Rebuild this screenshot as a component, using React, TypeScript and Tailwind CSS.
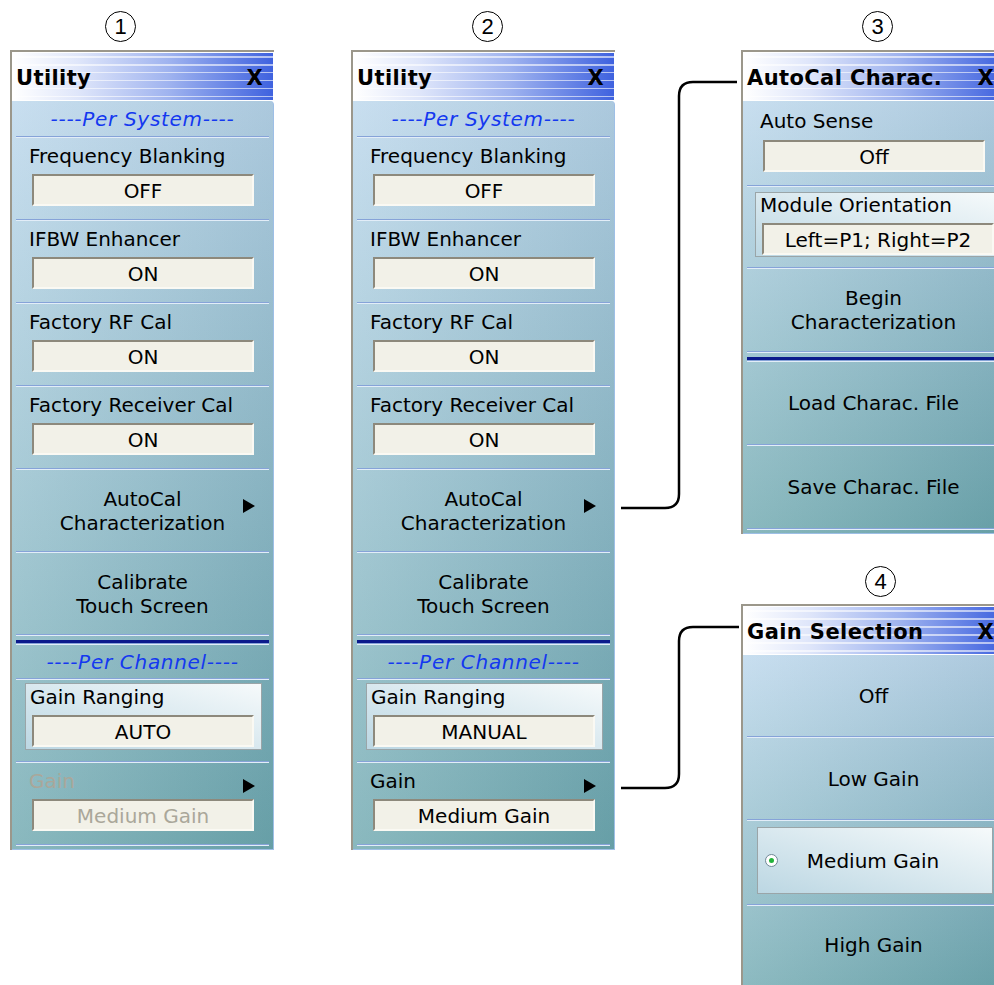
import React from "react";

const UI = "font-['DejaVu_Sans',sans-serif]";

const Num = ({ n }: { n: string }) => (
  <div className="flex h-[31px] w-[31px] items-center justify-center rounded-full border-[1.5px] border-black font-['Liberation_Sans',sans-serif] text-[22px] leading-none text-black">
    {n}
  </div>
);

const Arrow = ({ className }: { className: string }) => (
  <svg width="12" height="14" viewBox="0 0 12 14" className={className}>
    <polygon points="0,0 12,7 0,14" fill="#000" />
  </svg>
);

const Sep = () => (
  <div className="mx-[4px]">
    <div className="h-px bg-[#86a3d8]" />
    <div className="h-px bg-[#e2edf8]" />
  </div>
);

const Divider = () => (
  <div className="mx-[4px]">
    <div className="h-px bg-[#86a3d8]" />
    <div className="h-px bg-[#e2edf8]" />
    <div className="h-[4px]" />
    <div className="h-[3px] bg-[#0b1a8c]" />
    <div className="h-px bg-[#86a3d8]" />
    <div className="h-px bg-[#e2edf8]" />
  </div>
);

const Heading = ({ text, className }: { text: string; className: string }) => (
  <div
    className={`flex items-center justify-center text-[20px] italic tracking-[0.7px] text-[#1438f0] ${className}`}
  >
    {text}
  </div>
);

const ValueBox = ({ value, disabled }: { value: string; disabled?: boolean }) => (
  <div
    className={`flex h-[32px] items-center justify-center border-2 border-t-[#8d897c] border-l-[#8d897c] border-r-[#faf9f3] border-b-[#faf9f3] bg-[#f2f1e8] pt-[2px] text-[20px] leading-none ${
      disabled ? "text-[#aaa79a]" : "text-black"
    }`}
  >
    {value}
  </div>
);

const Field = ({
  label,
  value,
  disabled,
  arrow,
  className = "h-[81px] pt-[6px]",
  gap = "mt-[6px]",
}: {
  label: string;
  value: string;
  disabled?: boolean;
  arrow?: boolean;
  className?: string;
  gap?: string;
}) => (
  <div className={`relative ${className}`}>
    <div
      className={`pl-[17px] text-[20px] leading-[24px] ${
        disabled ? "text-[#aaa79a]" : "text-black"
      }`}
    >
      {label}
    </div>
    {arrow && <Arrow className="absolute right-[18px] top-[16px]" />}
    <div className={`ml-[20px] mr-[19px] ${gap}`}>
      <ValueBox value={value} disabled={disabled} />
    </div>
  </div>
);

const Highlight = ({
  label,
  value,
  className = "h-[81px] pt-[3px]",
}: {
  label: string;
  value: string;
  className?: string;
}) => (
  <div className={className}>
    <div className="ml-[13px] mr-[11px] h-[67px] border border-[#9aa5a8] bg-[linear-gradient(to_bottom_left,#f6fafb,#bcd7e3)] pt-[1px]">
      <div className="pl-[4px] text-[20px] leading-[24px] text-black">{label}</div>
      <div className="ml-[6px] mr-[7px] mt-[6px]">
        <ValueBox value={value} />
      </div>
    </div>
  </div>
);

const Action = ({
  lines,
  arrow,
  className = "h-[81px]",
}: {
  lines: string[];
  arrow?: boolean;
  className?: string;
}) => (
  <div
    className={`relative flex flex-col items-center justify-center text-[20px] leading-[24px] text-black ${className}`}
  >
    {lines.map((l) => (
      <div key={l}>{l}</div>
    ))}
    {arrow && <Arrow className="absolute right-[18px] top-[29px]" />}
  </div>
);

const Panel = ({ title, children }: { title: string; children: React.ReactNode }) => (
  <div className={`w-[264px] border-l-2 border-t-2 border-[#9b978b] bg-white ${UI}`}>
    <div className="flex h-[49px] items-center justify-between border border-white bg-[repeating-linear-gradient(to_bottom,transparent_0px,transparent_3px,#ffffff99_3px,#ffffff99_4.5px,transparent_4.5px,transparent_8px),linear-gradient(to_right,#ffffff,#dfe6fa_25%,#9fb3ef_60%,#3f62df)] pl-[3px] pr-[10px] pt-[5px] text-[21px] font-bold tracking-[0.4px] text-black">
      <span>{title}</span>
      <span>X</span>
    </div>
    <div className="rounded-tr-[4px] border-r border-b border-[#9ebfe6] bg-[linear-gradient(to_right,#ffffff2e,#00304016),linear-gradient(to_bottom,#bcd7ec,#70a9b0)] pb-[3px]">
      {children}
    </div>
  </div>
);

const UtilityPanel = ({ manual }: { manual?: boolean }) => (
  <Panel title="Utility">
    <Heading text="----Per System----" className="h-[35px]" />
    <Sep />
    <Field label="Frequency Blanking" value="OFF" />
    <Sep />
    <Field label="IFBW Enhancer" value="ON" />
    <Sep />
    <Field label="Factory RF Cal" value="ON" />
    <Sep />
    <Field label="Factory Receiver Cal" value="ON" />
    <Sep />
    <Action lines={["AutoCal", "Characterization"]} arrow />
    <Sep />
    <Action lines={["Calibrate", "Touch Screen"]} />
    <Divider />
    <Heading text="----Per Channel----" className="h-[33px]" />
    <Sep />
    <Highlight label="Gain Ranging" value={manual ? "MANUAL" : "AUTO"} />
    <Sep />
    <Field label="Gain" value="Medium Gain" disabled={!manual} arrow />
    <Sep />
  </Panel>
);

export default function App() {
  return (
    <div className="relative h-[985px] w-[994px] overflow-hidden bg-white">
      <div className="flex">
        <div className="ml-[10px] w-[264px] shrink-0">
          <div className="h-[50px] pl-[95px] pt-[11px]">
            <Num n="1" />
          </div>
          <UtilityPanel />
        </div>
        <div className="ml-[77px] w-[264px] shrink-0">
          <div className="h-[50px] pl-[121px] pt-[11px]">
            <Num n="2" />
          </div>
          <UtilityPanel manual />
        </div>
        <div className="ml-[126px] w-[264px] shrink-0">
          <div className="h-[50px] pl-[121px] pt-[11px]">
            <Num n="3" />
          </div>
          <Panel title="AutoCal Charac.">
            <Field label="Auto Sense" value="Off" className="h-[84px] pt-[8px]" gap="mt-[7px]" />
            <Sep />
            <div className="h-[80px] pt-[5px]">
              <div className="ml-[12px] h-[65px] border border-[#9aa5a8] bg-[linear-gradient(to_bottom_left,#f6fafb,#bcd7e3)]">
                <div className="pl-[4px] text-[20px] leading-[24px] text-black">Module Orientation</div>
                <div className="ml-[6px] mr-[9px] mt-[6px]">
                  <ValueBox value="Left=P1; Right=P2" />
                </div>
              </div>
            </div>
            <Sep />
            <Action lines={["Begin", "Characterization"]} className="h-[82px]" />
            <Divider />
            <Action lines={["Load Charac. File"]} className="h-[82px]" />
            <Sep />
            <Action lines={["Save Charac. File"]} className="h-[82px]" />
            <Sep />
          </Panel>
          <div className="h-[70px] pl-[124px] pt-[32px]">
            <Num n="4" />
          </div>
          <Panel title="Gain Selection">
            <Action lines={["Off"]} />
            <Sep />
            <Action lines={["Low Gain"]} />
            <Sep />
            <div className="h-[83px] pt-[6px]">
              <div className="relative ml-[14px] mr-[11px] flex h-[67px] items-center justify-center border border-[#9aa5a8] bg-[linear-gradient(to_bottom_left,#f6fafb,#bcd7e3)] text-[20px] text-black">
                <div className="absolute left-[7px] top-[26px] flex h-[13px] w-[13px] items-center justify-center rounded-full border border-[#6f8796] bg-white">
                  <div className="h-[5px] w-[5px] rounded-full bg-[#22b33a]" />
                </div>
                <span className="mr-[4px]">Medium Gain</span>
              </div>
            </div>
            <Sep />
            <Action lines={["High Gain"]} className="h-[90px] pb-[12px]" />
          </Panel>
        </div>
      </div>
      <svg className="pointer-events-none absolute left-0 top-0" width="994" height="985">
        <path
          d="M621 508 H665 Q679 508 679 494 V96 Q679 82 693 82 H737"
          fill="none"
          stroke="#000"
          strokeWidth="2.5"
        />
        <path
          d="M621 788 H665 Q679 788 679 774 V641 Q679 627 693 627 H739"
          fill="none"
          stroke="#000"
          strokeWidth="2.5"
        />
      </svg>
    </div>
  );
}
